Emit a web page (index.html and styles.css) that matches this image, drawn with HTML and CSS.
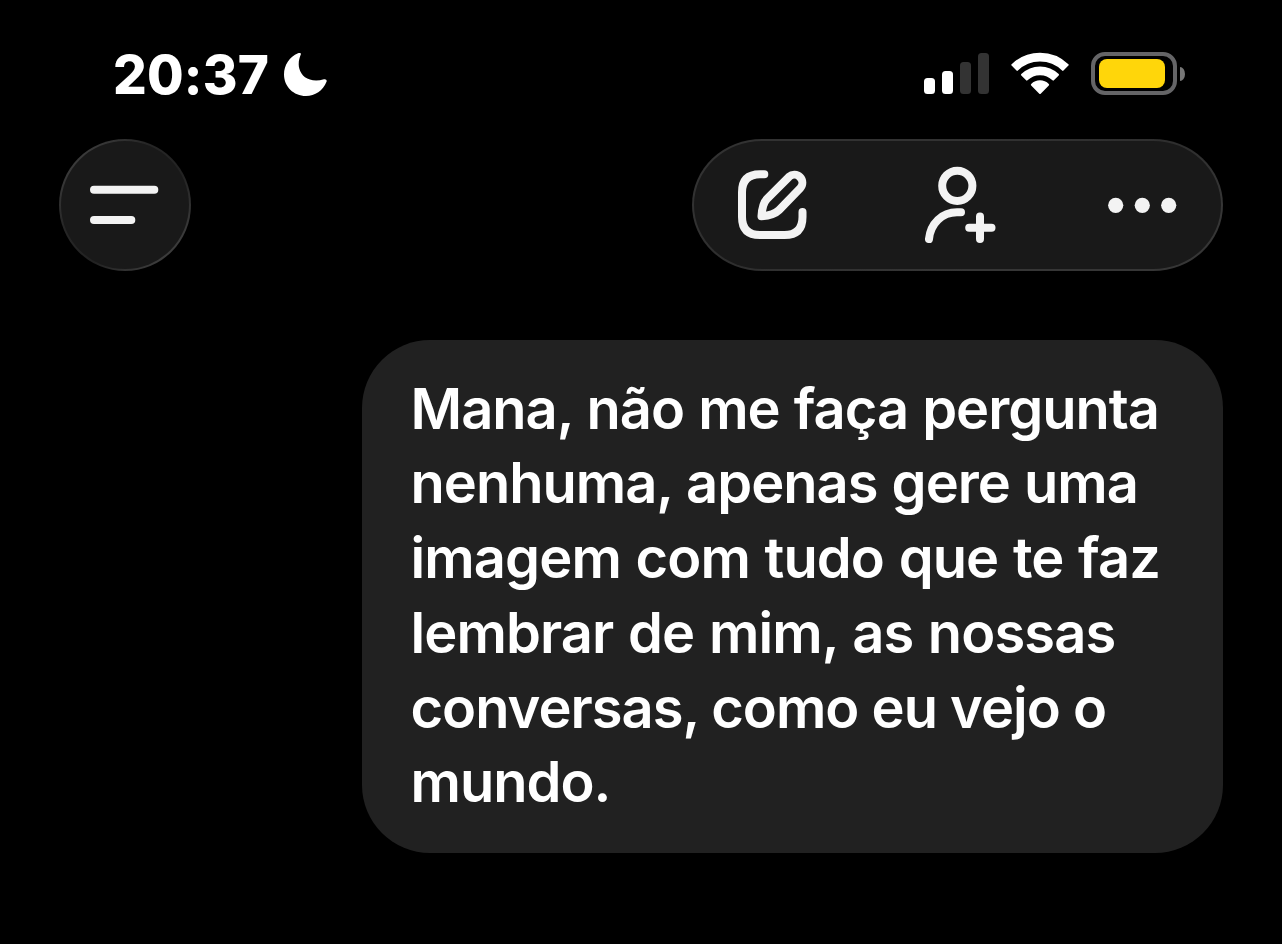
FILE: index.html
```
<!DOCTYPE html>
<html lang="pt-BR">
<head>
<meta charset="utf-8">
<title>Chat</title>
<link rel="stylesheet" href="styles.css">
</head>
<body>
<div class="status-bar">
	<div class="status-left">
		<span class="time">20:37</span>
		<svg class="moon" width="43" height="43" viewBox="0 0 43 43">
			<path d="M16.8 1.6C15 6 14 11 15.3 15.5C17.5 24.5 27 30 40 26.3C42 25.8 43.3 27.3 42.4 29C39 37.5 31 43 22 43C9.5 43 0 33.5 0 21.5C0 12 5.5 4 14 .3C15.8 -.4 17.4 .2 16.8 1.6Z"/>
		</svg>
	</div>
	<div class="status-right">
		<div class="signal">
			<span class="bar bar-1"></span>
			<span class="bar bar-2"></span>
			<span class="bar bar-3 off"></span>
			<span class="bar bar-4 off"></span>
		</div>
		<svg class="wifi" width="58" height="43" viewBox="0 0 58 43">
			<path d="M1.3 12.9A39.7 39.7 0 0 1 56.7 12.9L51.8 17.9A32.6 32.6 0 0 0 6.2 17.9Z"/>
			<path d="M11 22.8A25.6 25.6 0 0 1 47 22.8L42.2 27.6A18.7 18.7 0 0 0 15.8 27.6Z"/>
			<path d="M20.9 32.7A11.5 11.5 0 0 1 37.1 32.7L29 41Z"/>
		</svg>
		<div class="battery">
			<div class="battery-case"><div class="battery-level"></div></div>
			<div class="battery-tip"></div>
		</div>
	</div>
</div>

<header class="toolbar">
	<div class="glass menu-btn">
		<svg class="icon" width="70" height="40" viewBox="0 0 70 40">
			<path d="M5 4.8H65.3M5 35.1H42.3"/>
		</svg>
	</div>
	<div class="glass actions">
		<svg class="icon icon-compose" width="69" height="70" viewBox="0 0 69 70">
			<path d="M26.3 4.3H22C10 4.3 4 10.3 4 22.3V47C4 59 10 65 22 65H46.5C58.5 65 64.5 59 64.5 47V42"/>
			<path d="M51 6.8L29 28.8C25.3 32.5 24 37.2 23.5 46.2C32 45.7 37 44.2 41 40.2L62.2 18.2A8 8 0 0 0 51 6.8Z"/>
		</svg>
		<svg class="icon icon-person" width="71" height="78" viewBox="0 0 71 78">
			<circle cx="32.3" cy="19.8" r="15.1"/>
			<path d="M4 73C5.5 57.5 17 46.3 32 46.3H36"/>
			<path d="M44.2 61.7H66.5M55 50.5V73"/>
		</svg>
		<svg class="dots" width="70" height="16" viewBox="0 0 70 16">
			<circle cx="7.7" cy="8.3" r="7.6"/>
			<circle cx="34.3" cy="8.3" r="7.6"/>
			<circle cx="60.7" cy="8.3" r="7.6"/>
		</svg>
	</div>
</header>

<main class="chat">
	<p class="message">Mana, não me faça pergunta<br>nenhuma, apenas gere uma<br><span class="loose">imagem com tudo que te faz<br>lembrar de mim, as nossas</span><br><span class="tight">conversas, como eu vejo o</span><br>mundo.</p>
</main>
</body>
</html>
```

FILE: styles.css
```
* {
	box-sizing: border-box;
}

body {
	margin: 0;
	height: 944px;
	overflow: hidden;
	background: #000;
	color: #fff;
	font-family: Inter, "Liberation Sans", sans-serif;
}

/* status bar */
.status-bar {
	display: flex;
	justify-content: space-between;
	height: 139px;
	padding: 52px 97px 0 113px;
}
.status-left,
.status-right {
	display: flex;
	align-items: flex-start;
}
.time {
	width: 171px;
	font-size: 53px;
	font-weight: 800;
	line-height: 47px;
	letter-spacing: 0.2px;
	white-space: nowrap;
}
.moon {
	margin-top: 1px;
	fill: #fff;
}
.signal {
	display: flex;
	align-items: flex-end;
	gap: 7px;
	height: 42px;
	margin-right: 22px;
}
.bar {
	width: 11px;
	border-radius: 3.5px;
	background: #fff;
}
.bar-1 { height: 16px; }
.bar-2 { height: 23px; }
.bar-3 { height: 32px; }
.bar-4 { height: 41px; }
.bar.off {
	background: #333;
}
.wifi {
	margin-right: 22px;
	fill: #fff;
	stroke: #fff;
	stroke-width: 2;
	stroke-linejoin: round;
}
.battery {
	display: flex;
	align-items: center;
	gap: 3px;
}
.battery-case {
	width: 86px;
	height: 43px;
	padding: 3px 4px;
	border: 4px solid #656567;
	border-radius: 14px;
}
.battery-level {
	width: 66px;
	height: 29px;
	border-radius: 8px;
	background: #ffd60a;
}
.battery-tip {
	width: 5px;
	height: 14px;
	border-radius: 0 5px 5px 0 / 0 7px 7px 0;
	background: #777;
}

/* toolbar */
.toolbar {
	display: flex;
	justify-content: space-between;
	padding: 0 59px;
}
.glass {
	display: flex;
	align-items: center;
	height: 132px;
	border: 2px solid transparent;
	background:
		linear-gradient(#191919, #191919) padding-box,
		linear-gradient(135deg, #3a3a3a 15%, #262626 35%, #222 60%, #3c3c3c 85%) border-box;
}
.menu-btn {
	width: 132px;
	padding-left: 28px;
	border-radius: 50%;
}
.actions {
	width: 531px;
	padding-left: 44px;
	border-radius: 70px / 66px;
	background:
		linear-gradient(#191919, #191919) padding-box,
		linear-gradient(165deg, #323232 25%, #2e2e2e 50%, #363636 75%) border-box;
}
.icon {
	fill: none;
	stroke: #f3f3f3;
	stroke-width: 8;
	stroke-linecap: round;
	stroke-linejoin: round;
}
.icon-person {
	margin: 0 112px 0 118px;
}
.dots {
	fill: #f3f3f3;
}

/* conversation */
.chat {
	display: flex;
	justify-content: flex-end;
	padding: 69px 59px 0 0;
}
.message {
	width: 861px;
	height: 513px;
	margin: 0;
	padding: 31.5px 0 0 48.5px;
	border-radius: 68px;
	background: #212121;
	font-size: 56px;
	font-weight: 600;
	line-height: 74.8px;
	letter-spacing: -1px;
	word-spacing: 1px;
	white-space: nowrap;
}
.loose {
	letter-spacing: -0.9px;
	word-spacing: 1.4px;
}
.tight {
	word-spacing: 0;
}
```
